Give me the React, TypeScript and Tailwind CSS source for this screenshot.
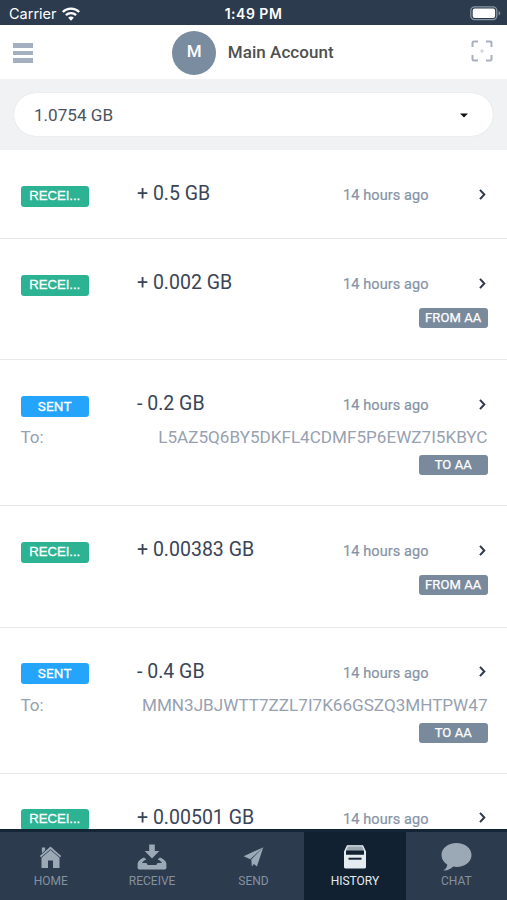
import React from "react";
import clsx from "clsx";

interface Transaction {
  type: "received" | "sent";
  amount: string;
  to?: string;
  tag?: string;
  height: string;
}

const transactions: Transaction[] = [
  { type: "received", amount: "+ 0.5 GB", height: "h-[89px]" },
  { type: "received", amount: "+ 0.002 GB", tag: "FROM AA", height: "h-[121px]" },
  { type: "sent", amount: "- 0.2 GB", to: "L5AZ5Q6BY5DKFL4CDMF5P6EWZ7I5KBYC", tag: "TO AA", height: "h-[146px]" },
  { type: "received", amount: "+ 0.00383 GB", tag: "FROM AA", height: "h-[121.5px]" },
  { type: "sent", amount: "- 0.4 GB", to: "MMN3JBJWTT7ZZL7I7K66GSZQ3MHTPW47", tag: "TO AA", height: "h-[146px]" },
  { type: "received", amount: "+ 0.00501 GB", height: "h-[121px]" },
];

const HomeIcon = () => (
  <svg width="23" height="23" viewBox="0 0 24 24" fill="currentColor">
    <path d="M12 0.6L0.8 10.4l1.3 1.4L12 3.3l9.9 8.5 1.3-1.4-3.6-3.2-7.6-6.6z" />
    <path d="M3 1.5h3.4v3L3 7.5z" />
    <path d="M12 4.2L2.6 12.2V23h6.8v-8h5.2v8h6.8V12.2z" />
  </svg>
);

const ReceiveIcon = () => (
  <svg width="30" height="26" viewBox="0 0 30 26" fill="currentColor">
    <path d="M12.2 0.5h5.6v6.500h4.500L15 14.500 7.700 7h4.500z" />
    <path d="M7 13.600l2.300 1.700c-1.500 1-3.200 2-4.300 3.700h4c.4 0 .7.200.9.600l.7 1.400h8.800l.7-1.400c.2-.4.500-.6.900-.6h4c-1.100-1.700-2.800-2.700-4.300-3.700l2.300-1.700c3 1.300 5.900 3.200 6.400 6v4c0 1.200-.6 1.900-1.800 1.900H2.400c-1.200 0-1.800-.7-1.800-1.900v-4c.5-2.800 3.400-4.700 6.400-6z" />
  </svg>
);

const SendIcon = () => (
  <svg width="22" height="22" viewBox="0 0 22 22" fill="currentColor">
    <path d="M21.300 1.200L1.600 10.300l6.600 3z" />
    <path d="M21.300 1.200L9.300 13.500l.5 7 2.100-2.500 3 2.500z" />
  </svg>
);

const HistoryIcon = () => (
  <svg width="22" height="24" viewBox="0 0 22 24">
    <path d="M3.400 0.300h15.200L20.500 5.600h-19z" fill="#9aa6b0" />
    <path d="M3 0.300h16l-.4 1.200H3.400z" fill="#d5dde4" />
    <path d="M2.800 0.500h1.200L2 6v3.800h18V6L18 .5h1.200L22 6.500v15.600c0 .9-.5 1.400-1.400 1.400H1.400c-.9 0-1.400-.5-1.400-1.400V6.500z" fill="#e4ebf1" />
    <path d="M4.500 12.700h13v2h-13z" fill="#142536" />
  </svg>
);

const ChatIcon = () => (
  <svg width="31" height="28" viewBox="0 0 31 28" fill="currentColor">
    <path d="M15.500 0C7 0 .5 5.200.5 12c0 4 2.200 7.500 5.800 9.700-.2 2.200-1.300 4.100-4 5.800 4.100.3 7.900-1.300 9.900-3.900 1.100.2 2.200.3 3.300.3 8.500 0 15-5.100 15-11.900S24 0 15.500 0z" />
  </svg>
);

const tabs = [
  { label: "HOME", icon: <HomeIcon /> },
  { label: "RECEIVE", icon: <ReceiveIcon /> },
  { label: "SEND", icon: <SendIcon /> },
  { label: "HISTORY", icon: <HistoryIcon />, active: true },
  { label: "CHAT", icon: <ChatIcon /> },
];

const StatusBar: React.FC = () => (
  <div className="grid h-[25px] shrink-0 grid-cols-3 items-center bg-[#2c3b4d] px-[9px] pt-[2px] font-[Inter] text-white">
    <div className="flex items-center gap-[6px]">
      <span className="w-[47px] text-[14.5px]">Carrier</span>
      <svg width="18" height="14" viewBox="0 0 18 14" fill="none" stroke="currentColor" strokeWidth="2.3">
        <path d="M0.800 5C5.300.600 12.700.600 17.200 5" />
        <path d="M3.900 8.200c2.800-2.700 7.400-2.700 10.200 0" />
        <path d="M9 13.700L6.200 10.700c1.500-1.500 4.100-1.500 5.600 0z" fill="currentColor" stroke="none" />
      </svg>
    </div>
    <span className="text-center text-[14px] font-semibold tracking-[0.5px]">1:49 PM</span>
    <div className="flex justify-end">
      <svg className="-mr-[3px]" width="31" height="15" viewBox="0 0 31 15">
        <rect x="0.8" y="0.8" width="26" height="12.8" rx="3.8" fill="none" stroke="#8996a3" strokeWidth="1.3" />
        <rect x="2.7" y="2.5" width="22.4" height="9.4" rx="2" fill="#fff" />
        <path d="M28.600 5c2.200.8 2.200 3.600 0 4.400z" fill="#8996a3" />
      </svg>
    </div>
  </div>
);

const Header: React.FC = () => (
  <header className="flex h-[54px] shrink-0 items-center justify-between bg-white pl-[13px] pr-[14px]">
    <div className="flex w-[22px] flex-col gap-[3px] pt-[2px]">
      <span className="h-[4.5px] w-[20px] bg-[#a4b0c2]" />
      <span className="h-[4.5px] w-[20px] bg-[#a4b0c2]" />
      <span className="h-[4.5px] w-[20px] bg-[#a4b0c2]" />
    </div>
    <div className="flex items-center gap-[11.5px] pt-[2px]">
      <div className="flex size-[44px] items-center justify-center rounded-full bg-[#7a8c9f] pb-[2px] text-[17px] font-medium text-white">M</div>
      <span className="text-[17px] font-medium tracking-[0.05px] text-[#4f4f4f]">Main Account</span>
    </div>
    <svg className="mb-[2px]" width="22" height="22" viewBox="0 0 22 22" fill="none" stroke="#a9b0bd" strokeWidth="2">
      <path d="M1.500 7V2.800q0-1.300 1.300-1.300H7M15 1.500h4.200q1.300 0 1.300 1.300V7M20.500 15v4.200q0 1.300-1.300 1.300H15M7 20.500H2.800q-1.300 0-1.300-1.300V15" />
      <path d="M11 8.800v4.400M8.800 11h4.400" stroke="#c9ced6" strokeWidth="1" />
    </svg>
  </header>
);

const TransactionItem: React.FC<{ tx: Transaction }> = ({ tx }) => (
  <div className={clsx("shrink-0 border-b border-[#e6e8eb] pl-[20.5px] pr-[19.5px] pt-[31px]", tx.height)}>
    <div className="flex h-[27px]">
      <div className="w-[116.5px] pt-[4.5px]">
        <div
          className={clsx(
            "h-[21px] w-[68.5px] rounded-[3px] text-center font-['Liberation_Sans'] text-[13.2px] leading-[20px] tracking-[-0.05px] text-white [-webkit-text-stroke:0.3px_white]",
            tx.type === "sent" ? "bg-[#24a4fb]" : "bg-[#2bb393]"
          )}
        >
          {tx.type === "sent" ? <span className="font-[Roboto] text-[13.5px] tracking-[0.2px]">SENT</span> : "RECEI..."}
        </div>
      </div>
      <span className="w-[206px] text-[19.5px] leading-[26px] text-[#394557]">{tx.amount}</span>
      <span className="grow pt-[2px] text-[14.5px] leading-[26px] tracking-[0.1px] text-[#8593a5] [-webkit-text-stroke:0.2px_#8593a5]">14 hours ago</span>
      <svg className="mr-[1.5px] mt-[7.5px]" width="7" height="11" viewBox="0 0 7 11" fill="none" stroke="#2f3949" strokeWidth="2">
        <path d="M1 0.900l4.300 4.600L1 10.100" />
      </svg>
    </div>
    {tx.to && (
      <div className="flex h-[25px] justify-between pt-px text-[17.1px] leading-[37px] text-[#97a1b0]">
        <span>To:</span>
        <span>{tx.to}</span>
      </div>
    )}
    {tx.tag && (
      <div className={clsx("flex justify-end", tx.to ? "pt-[12px]" : "pt-[11px]")}>
        <div className="h-[20px] w-[68.5px] rounded-[3px] bg-[#7a8a9d] text-center text-[13px] leading-[19px] tracking-[0.1px] text-white [-webkit-text-stroke:0.25px_white]">{tx.tag}</div>
      </div>
    )}
  </div>
);

const App: React.FC = () => {
  return (
    <div className="flex h-[900px] w-[507px] flex-col overflow-hidden bg-white font-[Roboto,sans-serif]">
      <StatusBar />
      <Header />
      <div className="h-[71px] shrink-0 bg-[#f1f2f3] px-[14px] pt-[14px]">
        <div className="flex h-[43px] items-center justify-between rounded-full bg-white pl-[20px] pr-[25px] shadow-[0_0_1px_#c4cacf]">
          <span className="pt-[3px] text-[17.1px] text-[#4a5361]">1.0754 GB</span>
          <svg className="mt-[2px]" width="8" height="5" viewBox="0 0 8 5">
            <path d="M0 0.500h8L4 4.500z" fill="#111" />
          </svg>
        </div>
      </div>
      <main className="flex min-h-0 flex-1 flex-col overflow-hidden">
        {transactions.map((tx) => (
          <TransactionItem key={tx.amount} tx={tx} />
        ))}
      </main>
      <nav className="grid h-[71px] shrink-0 grid-cols-5 border-t-[3px] border-[#142536] bg-[#2c3b4d]">
        {tabs.map((tab) => (
          <div
            key={tab.label}
            className={clsx("flex flex-col items-center", tab.active ? "bg-[#122131] text-[#e4ebf1]" : "text-[#9ba9b6]")}
          >
            <div className="flex h-[40px] items-center justify-center pt-[10px]">{tab.icon}</div>
            <span className={clsx("text-[12px] leading-[18px]", !tab.active && "text-[#8491a0]")}>{tab.label}</span>
          </div>
        ))}
      </nav>
    </div>
  );
};

export default App;
